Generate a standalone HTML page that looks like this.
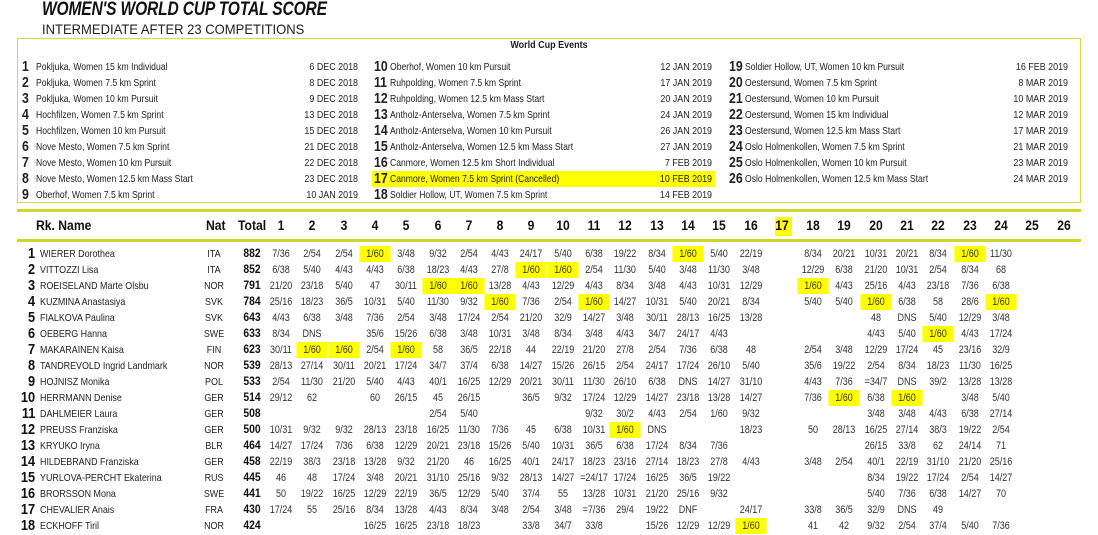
<!DOCTYPE html>
<html><head><meta charset="utf-8"><style>
*{margin:0;padding:0;box-sizing:border-box}
body{width:1098px;height:535px;background:#fff;position:relative;overflow:hidden;font-family:"Liberation Sans",sans-serif;color:#222}
.t1{position:absolute;left:42px;top:-1px;font-size:19px;font-weight:bold;font-style:italic;transform:scaleX(.82);transform-origin:left;letter-spacing:-.2px;color:#111}
.t2{position:absolute;left:42px;top:21px;font-size:14px;transform:scaleX(.93);transform-origin:left;color:#222}
.box{position:absolute;left:17px;top:38px;width:1064px;height:165px;border:1.5px solid #dada3a}
.wce{position:absolute;left:0;width:1098px;top:40px;text-align:center;font-size:10px;font-weight:bold;transform:scaleX(.9)}
.ev{position:absolute;height:16px;line-height:16px;font-size:10.5px;white-space:nowrap;width:300px}
.ev b{position:absolute;left:0;font-size:14.5px;transform:scaleX(.85);transform-origin:left}
.ev span{position:absolute;left:14px;transform:scaleX(.82);transform-origin:left}
.ev.w span{left:16px}
.dt{position:absolute;height:16px;line-height:16px;font-size:10.5px;text-align:right;width:80px;transform:scaleX(.85);transform-origin:right}
.hl{position:absolute;left:372px;top:171px;width:343px;height:16px;background:#ffff00}
.ln{position:absolute;left:17px;width:1064px;height:3px;background:#cdd629}
.hd{position:absolute;top:217px;height:18px;line-height:18px;font-size:13.5px;font-weight:bold;color:#111}
.hd.c{width:30px;margin-left:-15px;text-align:center;transform:scaleX(.9)}
.r{position:absolute;left:0;width:1098px;height:16px;line-height:16px}
.r i{position:absolute;width:38px;margin-left:-19px;text-align:center;font-style:normal;font-size:11px;transform:scaleX(.82);height:16px;color:#333}
.r i.h{background:#ffff00}
.r .rk{position:absolute;right:1063px;font-size:14.5px;font-weight:bold;color:#111;transform:scaleX(.88);transform-origin:right}
.r .nm{position:absolute;left:40px;font-size:10.5px;transform:scaleX(.85);transform-origin:left;white-space:nowrap}
.r .nt{position:absolute;left:202px;width:24px;text-align:center;font-size:10.5px;transform:scaleX(.85)}
.r .tt{position:absolute;left:238px;width:28px;text-align:center;font-size:11.5px;font-weight:bold;color:#111;transform:scaleX(.9)}
.c1{left:281px}.c2{left:312.3px}.c3{left:343.6px}.c4{left:374.9px}.c5{left:406.2px}.c6{left:437.5px}.c7{left:468.8px}.c8{left:500.1px}.c9{left:531.4px}.c10{left:562.7px}.c11{left:594px}.c12{left:625.3px}.c13{left:656.6px}.c14{left:687.9px}.c15{left:719.2px}.c16{left:750.5px}.c17{left:781.8px}.c18{left:813.1px}.c19{left:844.4px}.c20{left:875.7px}.c21{left:907px}.c22{left:938.3px}.c23{left:969.6px}.c24{left:1000.9px}.c25{left:1032.2px}.c26{left:1063.5px}
</style></head><body>
<div class="t1">WOMEN'S WORLD CUP TOTAL SCORE</div>
<div class="t2">INTERMEDIATE AFTER 23 COMPETITIONS</div>
<div class="box"></div>
<div class="wce">World Cup Events</div>
<div class="hl"></div>

<div class="ev" style="left:22px;top:59px"><b>1</b><span>Pokljuka, Women 15 km Individual</span></div><div class="dt" style="left:278px;top:59px">6 DEC 2018</div>
<div class="ev" style="left:22px;top:75px"><b>2</b><span>Pokljuka, Women 7.5 km Sprint</span></div><div class="dt" style="left:278px;top:75px">8 DEC 2018</div>
<div class="ev" style="left:22px;top:91px"><b>3</b><span>Pokljuka, Women 10 km Pursuit</span></div><div class="dt" style="left:278px;top:91px">9 DEC 2018</div>
<div class="ev" style="left:22px;top:107px"><b>4</b><span>Hochfilzen, Women 7.5 km Sprint</span></div><div class="dt" style="left:278px;top:107px">13 DEC 2018</div>
<div class="ev" style="left:22px;top:123px"><b>5</b><span>Hochfilzen, Women 10 km Pursuit</span></div><div class="dt" style="left:278px;top:123px">15 DEC 2018</div>
<div class="ev" style="left:22px;top:139px"><b>6</b><span>Nove Mesto, Women 7.5 km Sprint</span></div><div class="dt" style="left:278px;top:139px">21 DEC 2018</div>
<div class="ev" style="left:22px;top:155px"><b>7</b><span>Nove Mesto, Women 10 km Pursuit</span></div><div class="dt" style="left:278px;top:155px">22 DEC 2018</div>
<div class="ev" style="left:22px;top:171px"><b>8</b><span>Nove Mesto, Women 12.5 km Mass Start</span></div><div class="dt" style="left:278px;top:171px">23 DEC 2018</div>
<div class="ev" style="left:22px;top:187px"><b>9</b><span>Oberhof, Women 7.5 km Sprint</span></div><div class="dt" style="left:278px;top:187px">10 JAN 2019</div>

<div class="ev w" style="left:374px;top:59px"><b>10</b><span>Oberhof, Women 10 km Pursuit</span></div><div class="dt" style="left:632px;top:59px">12 JAN 2019</div>
<div class="ev w" style="left:374px;top:75px"><b>11</b><span>Ruhpolding, Women 7.5 km Sprint</span></div><div class="dt" style="left:632px;top:75px">17 JAN 2019</div>
<div class="ev w" style="left:374px;top:91px"><b>12</b><span>Ruhpolding, Women 12.5 km Mass Start</span></div><div class="dt" style="left:632px;top:91px">20 JAN 2019</div>
<div class="ev w" style="left:374px;top:107px"><b>13</b><span>Antholz-Anterselva, Women 7.5 km Sprint</span></div><div class="dt" style="left:632px;top:107px">24 JAN 2019</div>
<div class="ev w" style="left:374px;top:123px"><b>14</b><span>Antholz-Anterselva, Women 10 km Pursuit</span></div><div class="dt" style="left:632px;top:123px">26 JAN 2019</div>
<div class="ev w" style="left:374px;top:139px"><b>15</b><span>Antholz-Anterselva, Women 12.5 km Mass Start</span></div><div class="dt" style="left:632px;top:139px">27 JAN 2019</div>
<div class="ev w" style="left:374px;top:155px"><b>16</b><span>Canmore, Women 12.5 km Short Individual</span></div><div class="dt" style="left:632px;top:155px">7 FEB 2019</div>
<div class="ev w" style="left:374px;top:171px"><b>17</b><span>Canmore, Women 7.5 km Sprint (Cancelled)</span></div><div class="dt" style="left:632px;top:171px">10 FEB 2019</div>
<div class="ev w" style="left:374px;top:187px"><b>18</b><span>Soldier Hollow, UT, Women 7.5 km Sprint</span></div><div class="dt" style="left:632px;top:187px">14 FEB 2019</div>

<div class="ev w" style="left:729px;top:59px"><b>19</b><span>Soldier Hollow, UT, Women 10 km Pursuit</span></div><div class="dt" style="left:988px;top:59px">16 FEB 2019</div>
<div class="ev w" style="left:729px;top:75px"><b>20</b><span>Oestersund, Women 7.5 km Sprint</span></div><div class="dt" style="left:988px;top:75px">8 MAR 2019</div>
<div class="ev w" style="left:729px;top:91px"><b>21</b><span>Oestersund, Women 10 km Pursuit</span></div><div class="dt" style="left:988px;top:91px">10 MAR 2019</div>
<div class="ev w" style="left:729px;top:107px"><b>22</b><span>Oestersund, Women 15 km Individual</span></div><div class="dt" style="left:988px;top:107px">12 MAR 2019</div>
<div class="ev w" style="left:729px;top:123px"><b>23</b><span>Oestersund, Women 12.5 km Mass Start</span></div><div class="dt" style="left:988px;top:123px">17 MAR 2019</div>
<div class="ev w" style="left:729px;top:139px"><b>24</b><span>Oslo Holmenkollen, Women 7.5 km Sprint</span></div><div class="dt" style="left:988px;top:139px">21 MAR 2019</div>
<div class="ev w" style="left:729px;top:155px"><b>25</b><span>Oslo Holmenkollen, Women 10 km Pursuit</span></div><div class="dt" style="left:988px;top:155px">23 MAR 2019</div>
<div class="ev w" style="left:729px;top:171px"><b>26</b><span>Oslo Holmenkollen, Women 12.5 km Mass Start</span></div><div class="dt" style="left:988px;top:171px">24 MAR 2019</div>

<div class="ln" style="top:209px"></div>
<div class="ln" style="top:239px"></div>
<div class="hd" style="left:36px;transform:scaleX(.9);transform-origin:left">Rk. Name</div>
<div class="hd" style="left:206px;transform:scaleX(.9);transform-origin:left">Nat</div>
<div class="hd" style="left:238px;transform:scaleX(.9);transform-origin:left">Total</div>
<div class="hd c c1">1</div><div class="hd c c2">2</div><div class="hd c c3">3</div><div class="hd c c4">4</div><div class="hd c c5">5</div><div class="hd c c6">6</div><div class="hd c c7">7</div><div class="hd c c8">8</div><div class="hd c c9">9</div><div class="hd c c10">10</div><div class="hd c c11">11</div><div class="hd c c12">12</div><div class="hd c c13">13</div><div class="hd c c14">14</div><div class="hd c c15">15</div><div class="hd c c16">16</div>
<div style="position:absolute;left:775px;top:217px;width:17px;height:19px;background:#ffff00"></div>
<div class="hd c c17">17</div><div class="hd c c18">18</div><div class="hd c c19">19</div><div class="hd c c20">20</div><div class="hd c c21">21</div><div class="hd c c22">22</div><div class="hd c c23">23</div><div class="hd c c24">24</div><div class="hd c c25">25</div><div class="hd c c26">26</div>

<div class="r" style="top:246px"><span class="rk">1</span><span class="nm">WIERER Dorothea</span><span class="nt">ITA</span><span class="tt">882</span><i class="c1">7/36</i><i class="c2">2/54</i><i class="c3">2/54</i><i class="c4 h">1/60</i><i class="c5">3/48</i><i class="c6">9/32</i><i class="c7">2/54</i><i class="c8">4/43</i><i class="c9">24/17</i><i class="c10">5/40</i><i class="c11">6/38</i><i class="c12">19/22</i><i class="c13">8/34</i><i class="c14 h">1/60</i><i class="c15">5/40</i><i class="c16">22/19</i><i class="c18">8/34</i><i class="c19">20/21</i><i class="c20">10/31</i><i class="c21">20/21</i><i class="c22">8/34</i><i class="c23 h">1/60</i><i class="c24">11/30</i></div>
<div class="r" style="top:262px"><span class="rk">2</span><span class="nm">VITTOZZI Lisa</span><span class="nt">ITA</span><span class="tt">852</span><i class="c1">6/38</i><i class="c2">5/40</i><i class="c3">4/43</i><i class="c4">4/43</i><i class="c5">6/38</i><i class="c6">18/23</i><i class="c7">4/43</i><i class="c8">27/8</i><i class="c9 h">1/60</i><i class="c10 h">1/60</i><i class="c11">2/54</i><i class="c12">11/30</i><i class="c13">5/40</i><i class="c14">3/48</i><i class="c15">11/30</i><i class="c16">3/48</i><i class="c18">12/29</i><i class="c19">6/38</i><i class="c20">21/20</i><i class="c21">10/31</i><i class="c22">2/54</i><i class="c23">8/34</i><i class="c24">68</i></div>
<div class="r" style="top:278px"><span class="rk">3</span><span class="nm">ROEISELAND Marte Olsbu</span><span class="nt">NOR</span><span class="tt">791</span><i class="c1">21/20</i><i class="c2">23/18</i><i class="c3">5/40</i><i class="c4">47</i><i class="c5">30/11</i><i class="c6 h">1/60</i><i class="c7 h">1/60</i><i class="c8">13/28</i><i class="c9">4/43</i><i class="c10">12/29</i><i class="c11">4/43</i><i class="c12">8/34</i><i class="c13">3/48</i><i class="c14">4/43</i><i class="c15">10/31</i><i class="c16">12/29</i><i class="c18 h">1/60</i><i class="c19">4/43</i><i class="c20">25/16</i><i class="c21">4/43</i><i class="c22">23/18</i><i class="c23">7/36</i><i class="c24">6/38</i></div>
<div class="r" style="top:294px"><span class="rk">4</span><span class="nm">KUZMINA Anastasiya</span><span class="nt">SVK</span><span class="tt">784</span><i class="c1">25/16</i><i class="c2">18/23</i><i class="c3">36/5</i><i class="c4">10/31</i><i class="c5">5/40</i><i class="c6">11/30</i><i class="c7">9/32</i><i class="c8 h">1/60</i><i class="c9">7/36</i><i class="c10">2/54</i><i class="c11 h">1/60</i><i class="c12">14/27</i><i class="c13">10/31</i><i class="c14">5/40</i><i class="c15">20/21</i><i class="c16">8/34</i><i class="c18">5/40</i><i class="c19">5/40</i><i class="c20 h">1/60</i><i class="c21">6/38</i><i class="c22">58</i><i class="c23">28/6</i><i class="c24 h">1/60</i></div>
<div class="r" style="top:310px"><span class="rk">5</span><span class="nm">FIALKOVA Paulina</span><span class="nt">SVK</span><span class="tt">643</span><i class="c1">4/43</i><i class="c2">6/38</i><i class="c3">3/48</i><i class="c4">7/36</i><i class="c5">2/54</i><i class="c6">3/48</i><i class="c7">17/24</i><i class="c8">2/54</i><i class="c9">21/20</i><i class="c10">32/9</i><i class="c11">14/27</i><i class="c12">3/48</i><i class="c13">30/11</i><i class="c14">28/13</i><i class="c15">16/25</i><i class="c16">13/28</i><i class="c20">48</i><i class="c21">DNS</i><i class="c22">5/40</i><i class="c23">12/29</i><i class="c24">3/48</i></div>
<div class="r" style="top:326px"><span class="rk">6</span><span class="nm">OEBERG Hanna</span><span class="nt">SWE</span><span class="tt">633</span><i class="c1">8/34</i><i class="c2">DNS</i><i class="c4">35/6</i><i class="c5">15/26</i><i class="c6">6/38</i><i class="c7">3/48</i><i class="c8">10/31</i><i class="c9">3/48</i><i class="c10">8/34</i><i class="c11">3/48</i><i class="c12">4/43</i><i class="c13">34/7</i><i class="c14">24/17</i><i class="c15">4/43</i><i class="c20">4/43</i><i class="c21">5/40</i><i class="c22 h">1/60</i><i class="c23">4/43</i><i class="c24">17/24</i></div>
<div class="r" style="top:342px"><span class="rk">7</span><span class="nm">MAKARAINEN Kaisa</span><span class="nt">FIN</span><span class="tt">623</span><i class="c1">30/11</i><i class="c2 h">1/60</i><i class="c3 h">1/60</i><i class="c4">2/54</i><i class="c5 h">1/60</i><i class="c6">58</i><i class="c7">36/5</i><i class="c8">22/18</i><i class="c9">44</i><i class="c10">22/19</i><i class="c11">21/20</i><i class="c12">27/8</i><i class="c13">2/54</i><i class="c14">7/36</i><i class="c15">6/38</i><i class="c16">48</i><i class="c18">2/54</i><i class="c19">3/48</i><i class="c20">12/29</i><i class="c21">17/24</i><i class="c22">45</i><i class="c23">23/16</i><i class="c24">32/9</i></div>
<div class="r" style="top:358px"><span class="rk">8</span><span class="nm">TANDREVOLD Ingrid Landmark</span><span class="nt">NOR</span><span class="tt">539</span><i class="c1">28/13</i><i class="c2">27/14</i><i class="c3">30/11</i><i class="c4">20/21</i><i class="c5">17/24</i><i class="c6">34/7</i><i class="c7">37/4</i><i class="c8">6/38</i><i class="c9">14/27</i><i class="c10">15/26</i><i class="c11">26/15</i><i class="c12">2/54</i><i class="c13">24/17</i><i class="c14">17/24</i><i class="c15">26/10</i><i class="c16">5/40</i><i class="c18">35/6</i><i class="c19">19/22</i><i class="c20">2/54</i><i class="c21">8/34</i><i class="c22">18/23</i><i class="c23">11/30</i><i class="c24">16/25</i></div>
<div class="r" style="top:374px"><span class="rk">9</span><span class="nm">HOJNISZ Monika</span><span class="nt">POL</span><span class="tt">533</span><i class="c1">2/54</i><i class="c2">11/30</i><i class="c3">21/20</i><i class="c4">5/40</i><i class="c5">4/43</i><i class="c6">40/1</i><i class="c7">16/25</i><i class="c8">12/29</i><i class="c9">20/21</i><i class="c10">30/11</i><i class="c11">11/30</i><i class="c12">26/10</i><i class="c13">6/38</i><i class="c14">DNS</i><i class="c15">14/27</i><i class="c16">31/10</i><i class="c18">4/43</i><i class="c19">7/36</i><i class="c20">=34/7</i><i class="c21">DNS</i><i class="c22">39/2</i><i class="c23">13/28</i><i class="c24">13/28</i></div>
<div class="r" style="top:390px"><span class="rk">10</span><span class="nm">HERRMANN Denise</span><span class="nt">GER</span><span class="tt">514</span><i class="c1">29/12</i><i class="c2">62</i><i class="c4">60</i><i class="c5">26/15</i><i class="c6">45</i><i class="c7">26/15</i><i class="c9">36/5</i><i class="c10">9/32</i><i class="c11">17/24</i><i class="c12">12/29</i><i class="c13">14/27</i><i class="c14">23/18</i><i class="c15">13/28</i><i class="c16">14/27</i><i class="c18">7/36</i><i class="c19 h">1/60</i><i class="c20">6/38</i><i class="c21 h">1/60</i><i class="c23">3/48</i><i class="c24">5/40</i></div>
<div class="r" style="top:406px"><span class="rk">11</span><span class="nm">DAHLMEIER Laura</span><span class="nt">GER</span><span class="tt">508</span><i class="c6">2/54</i><i class="c7">5/40</i><i class="c11">9/32</i><i class="c12">30/2</i><i class="c13">4/43</i><i class="c14">2/54</i><i class="c15">1/60</i><i class="c16">9/32</i><i class="c20">3/48</i><i class="c21">3/48</i><i class="c22">4/43</i><i class="c23">6/38</i><i class="c24">27/14</i></div>
<div class="r" style="top:422px"><span class="rk">12</span><span class="nm">PREUSS Franziska</span><span class="nt">GER</span><span class="tt">500</span><i class="c1">10/31</i><i class="c2">9/32</i><i class="c3">9/32</i><i class="c4">28/13</i><i class="c5">23/18</i><i class="c6">16/25</i><i class="c7">11/30</i><i class="c8">7/36</i><i class="c9">45</i><i class="c10">6/38</i><i class="c11">10/31</i><i class="c12 h">1/60</i><i class="c13">DNS</i><i class="c16">18/23</i><i class="c18">50</i><i class="c19">28/13</i><i class="c20">16/25</i><i class="c21">27/14</i><i class="c22">38/3</i><i class="c23">19/22</i><i class="c24">2/54</i></div>
<div class="r" style="top:438px"><span class="rk">13</span><span class="nm">KRYUKO Iryna</span><span class="nt">BLR</span><span class="tt">464</span><i class="c1">14/27</i><i class="c2">17/24</i><i class="c3">7/36</i><i class="c4">6/38</i><i class="c5">12/29</i><i class="c6">20/21</i><i class="c7">23/18</i><i class="c8">15/26</i><i class="c9">5/40</i><i class="c10">10/31</i><i class="c11">36/5</i><i class="c12">6/38</i><i class="c13">17/24</i><i class="c14">8/34</i><i class="c15">7/36</i><i class="c20">26/15</i><i class="c21">33/8</i><i class="c22">62</i><i class="c23">24/14</i><i class="c24">71</i></div>
<div class="r" style="top:454px"><span class="rk">14</span><span class="nm">HILDEBRAND Franziska</span><span class="nt">GER</span><span class="tt">458</span><i class="c1">22/19</i><i class="c2">38/3</i><i class="c3">23/18</i><i class="c4">13/28</i><i class="c5">9/32</i><i class="c6">21/20</i><i class="c7">46</i><i class="c8">16/25</i><i class="c9">40/1</i><i class="c10">24/17</i><i class="c11">18/23</i><i class="c12">23/16</i><i class="c13">27/14</i><i class="c14">18/23</i><i class="c15">27/8</i><i class="c16">4/43</i><i class="c18">3/48</i><i class="c19">2/54</i><i class="c20">40/1</i><i class="c21">22/19</i><i class="c22">31/10</i><i class="c23">21/20</i><i class="c24">25/16</i></div>
<div class="r" style="top:470px"><span class="rk">15</span><span class="nm">YURLOVA-PERCHT Ekaterina</span><span class="nt">RUS</span><span class="tt">445</span><i class="c1">46</i><i class="c2">48</i><i class="c3">17/24</i><i class="c4">3/48</i><i class="c5">20/21</i><i class="c6">31/10</i><i class="c7">25/16</i><i class="c8">9/32</i><i class="c9">28/13</i><i class="c10">14/27</i><i class="c11">=24/17</i><i class="c12">17/24</i><i class="c13">16/25</i><i class="c14">36/5</i><i class="c15">19/22</i><i class="c20">8/34</i><i class="c21">19/22</i><i class="c22">17/24</i><i class="c23">2/54</i><i class="c24">14/27</i></div>
<div class="r" style="top:486px"><span class="rk">16</span><span class="nm">BRORSSON Mona</span><span class="nt">SWE</span><span class="tt">441</span><i class="c1">50</i><i class="c2">19/22</i><i class="c3">16/25</i><i class="c4">12/29</i><i class="c5">22/19</i><i class="c6">36/5</i><i class="c7">12/29</i><i class="c8">5/40</i><i class="c9">37/4</i><i class="c10">55</i><i class="c11">13/28</i><i class="c12">10/31</i><i class="c13">21/20</i><i class="c14">25/16</i><i class="c15">9/32</i><i class="c20">5/40</i><i class="c21">7/36</i><i class="c22">6/38</i><i class="c23">14/27</i><i class="c24">70</i></div>
<div class="r" style="top:502px"><span class="rk">17</span><span class="nm">CHEVALIER Anais</span><span class="nt">FRA</span><span class="tt">430</span><i class="c1">17/24</i><i class="c2">55</i><i class="c3">25/16</i><i class="c4">8/34</i><i class="c5">13/28</i><i class="c6">4/43</i><i class="c7">8/34</i><i class="c8">3/48</i><i class="c9">2/54</i><i class="c10">3/48</i><i class="c11">=7/36</i><i class="c12">29/4</i><i class="c13">19/22</i><i class="c14">DNF</i><i class="c16">24/17</i><i class="c18">33/8</i><i class="c19">36/5</i><i class="c20">32/9</i><i class="c21">DNS</i><i class="c22">49</i></div>
<div class="r" style="top:518px"><span class="rk">18</span><span class="nm">ECKHOFF Tiril</span><span class="nt">NOR</span><span class="tt">424</span><i class="c4">16/25</i><i class="c5">16/25</i><i class="c6">23/18</i><i class="c7">18/23</i><i class="c9">33/8</i><i class="c10">34/7</i><i class="c11">33/8</i><i class="c13">15/26</i><i class="c14">12/29</i><i class="c15">12/29</i><i class="c16 h">1/60</i><i class="c18">41</i><i class="c19">42</i><i class="c20">9/32</i><i class="c21">2/54</i><i class="c22">37/4</i><i class="c23">5/40</i><i class="c24">7/36</i></div>
</body></html>
